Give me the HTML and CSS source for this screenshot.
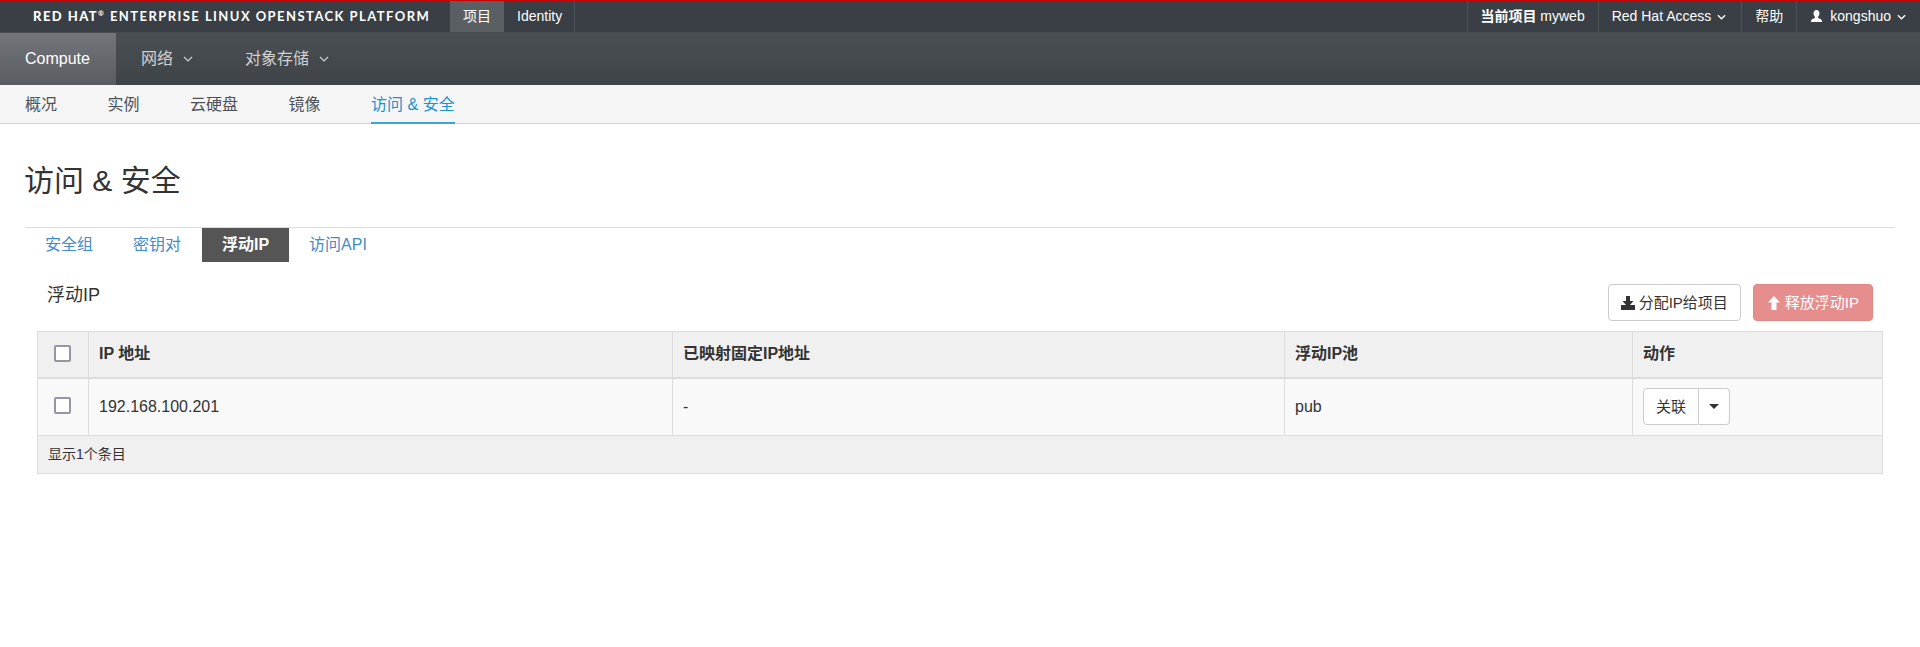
FILE: index.html
```html
<!DOCTYPE html>
<html lang="zh">
<head>
<meta charset="utf-8">
<title>访问 &amp; 安全</title>
<link rel="stylesheet" href="styles.css">
</head>
<body>
<header class="topbar">
  <div class="brand"><b>RED HAT</b><sup>®</sup> ENTERPRISE LINUX OPENSTACK PLATFORM</div>
  <nav class="topnav">
    <a class="topitem current">项目</a>
    <a class="topitem bordered">Identity</a>
  </nav>
  <nav class="topnav right">
    <a class="topitem bordered-l project"><span><b>当前项目</b> myweb</span></a>
    <a class="topitem bordered-l access"><span>Red Hat Access</span><svg class="chev-s" viewBox="0 0 10 6"><path d="M1 1l4 4 4-4" fill="none" stroke="currentColor" stroke-width="1.5"/></svg></a>
    <a class="topitem bordered-l">帮助</a>
    <a class="topitem bordered-l user"><svg class="usericon" viewBox="0 0 14 14"><path d="M7 0c2.100 0 3.200 1.600 3.200 3.600 0 1.500-.6 2.900-1.500 3.800v1.300c1.500.6 4.300 1.500 4.300 3.300v1H1v-1c0-1.800 2.800-2.700 4.300-3.300V7.400C4.400 6.500 3.800 5.100 3.800 3.600 3.800 1.600 4.900 0 7 0z" fill="currentColor"/></svg><span>kongshuo</span><svg class="chev-s" viewBox="0 0 10 6"><path d="M1 1l4 4 4-4" fill="none" stroke="currentColor" stroke-width="1.5"/></svg></a>
  </nav>
</header>

<nav class="mainnav">
  <a class="mainitem active">Compute</a>
  <a class="mainitem">网络 <svg class="chev" viewBox="0 0 10 6"><path d="M1 1l4 4 4-4" fill="none" stroke="currentColor" stroke-width="1.200"/></svg></a>
  <a class="mainitem">对象存储 <svg class="chev" viewBox="0 0 10 6"><path d="M1 1l4 4 4-4" fill="none" stroke="currentColor" stroke-width="1.200"/></svg></a>
</nav>

<nav class="subnav">
  <a class="subitem">概况</a>
  <a class="subitem">实例</a>
  <a class="subitem">云硬盘</a>
  <a class="subitem">镜像</a>
  <a class="subitem active">访问 &amp; 安全</a>
</nav>

<main class="content">
  <h1 class="pagetitle">访问 &amp; 安全</h1>
  <ul class="tabs">
    <li class="tab">安全组</li>
    <li class="tab">密钥对</li>
    <li class="tab active">浮动IP</li>
    <li class="tab">访问API</li>
  </ul>

  <div class="tablehead">
    <h3 class="tabletitle">浮动IP</h3>
    <div class="actions">
      <button class="btn"><svg class="btnicon" viewBox="0 0 14 14"><path d="M5 0h4v5h3.500L9 9h5v5H0V9h5L1.500 5H5z" fill="currentColor"/></svg>分配IP给项目</button>
      <button class="btn danger"><svg class="btnicon" viewBox="0 0 14 14"><path d="M7 0l6 6.500H9.500V14h-5V6.500H1z" fill="currentColor"/></svg>释放浮动IP</button>
    </div>
  </div>

  <table class="grid">
    <colgroup>
      <col class="c-check"><col class="c-ip"><col class="c-fixed"><col class="c-pool"><col class="c-act">
    </colgroup>
    <thead>
      <tr>
        <th class="checkcell"><span class="check"></span></th>
        <th>IP 地址</th>
        <th>已映射固定IP地址</th>
        <th>浮动IP池</th>
        <th>动作</th>
      </tr>
    </thead>
    <tbody>
      <tr>
        <td class="checkcell"><span class="check"></span></td>
        <td>192.168.100.201</td>
        <td>-</td>
        <td>pub</td>
        <td>
          <div class="split">
            <button class="splitmain">关联</button>
            <button class="splitcaret"><span class="caret"></span></button>
          </div>
        </td>
      </tr>
    </tbody>
    <tfoot>
      <tr><td colspan="5" class="foot">显示1个条目</td></tr>
    </tfoot>
  </table>
</main>
</body>
</html>
```
FILE: styles.css
```css
* { box-sizing: border-box; }
html, body { margin: 0; padding: 0; }
body {
  background: #fff;
  color: #333;
  font: 14px/20px "Liberation Sans", "Noto Sans CJK SC", sans-serif;
}
a { color: inherit; text-decoration: none; }

.topbar {
  display: flex;
  height: 33px;
  background: #393f45;
  border-top: 1px solid #c00;
  border-bottom: 1px solid #474c50;
  color: #fff;
}
.brand {
  width: 450px;
  padding-left: 33px;
  font: 700 13px/31px Lato, "Liberation Sans", sans-serif;
  letter-spacing: 1.440px;
  white-space: nowrap;
}
.brand b { font-weight: 900; }
.brand sup { font-size: 7px; line-height: 0; }
.topnav { display: flex; }
.topnav.right { margin-left: auto; }
.topitem {
  display: flex;
  align-items: center;
  gap: 6px;
  padding: 0 13px;
  line-height: 31px;
  white-space: pre;
}
.topitem.current { background: #5a5f63; }
.topitem.bordered { border-right: 1px solid #4d5257; padding-right: 12px; }
.topitem.bordered-l { border-left: 1px solid #4d5257; }
.topitem.project { padding: 0 13px 0 12px; }
.topitem.access { padding-right: 15px; }
.topitem.user { padding-right: 14px; }
.chev-s { width: 9px; height: 6px; }
.usericon { width: 13px; height: 13px; margin-right: 1px; }

.mainnav {
  display: flex;
  height: 52px;
  background: linear-gradient(#4a4f54, #3f4448);
  color: #d1d1d1;
}
.mainitem {
  display: flex;
  align-items: center;
  gap: 10px;
  padding: 0 27px 0 25px;
  font-size: 16px;
}
.mainitem.active {
  width: 116px;
  color: #fff;
  background: linear-gradient(#72767a, #595d62);
}
.chev { width: 10px; height: 6px; }

.subnav {
  display: flex;
  gap: 50.500px;
  height: 39px;
  padding: 0 25px;
  background: #f5f5f5;
  border-bottom: 1px solid #d1d1d1;
  color: #4d5258;
  font-size: 16px;
  line-height: 40px;
}
.subitem.active {
  color: #1a93cf;
  height: 39px;
  border-bottom: 2px solid #39a5dc;
}

.content { padding: 0 25px; }
.pagetitle {
  margin: 0 0 0 -1px;
  padding: 37px 0 26px;
  font-size: 30px;
  font-weight: 400;
  line-height: 40px;
  color: #333;
}
.tabs {
  display: flex;
  margin: 0;
  padding: 0;
  list-style: none;
  border-top: 1px solid #ddd;
}
.tab {
  height: 34px;
  padding: 0 20px;
  font-size: 16px;
  line-height: 33px;
  color: #428bca;
}
.tab.active {
  width: 87px;
  margin-left: 1px;
  padding: 0;
  background: #555;
  color: #fff;
  font-weight: 700;
  text-align: center;
}

.tablehead {
  display: flex;
  justify-content: space-between;
  padding: 22px 9px 10px 22px;
  margin: 0 13px 0 0;
}
.tabletitle {
  margin: 0;
  font-size: 18px;
  font-weight: 400;
  line-height: 22px;
}
.actions { display: flex; gap: 12px; }
.btn {
  display: flex;
  align-items: center;
  gap: 4px;
  height: 37px;
  padding: 0 12px;
  background: #fff;
  border: 1px solid #ccc;
  border-radius: 4px;
  color: #333;
  font: 15px/20px "Liberation Sans", "Noto Sans CJK SC", sans-serif;
}
.btn.danger {
  padding: 0 13px;
  background: #e68e8e;
  border-color: #e38686;
  color: #fff;
}
.btnicon { width: 14px; height: 14px; }

.grid {
  width: 1845px;
  margin-left: 12px;
  table-layout: fixed;
  border-collapse: collapse;
  border: 1px solid #ddd;
  font-size: 16px;
}
.c-check { width: 51px; }
.c-ip { width: 584px; }
.c-fixed { width: 612px; }
.c-pool { width: 348px; }
.c-act { width: 250px; }
.grid th, .grid td {
  padding: 0 10px;
  border: 1px solid #ddd;
  text-align: left;
  vertical-align: middle;
}
.grid th {
  height: 46px;
  background: #f0f0f0;
  border-bottom: 2px solid #ddd;
  font-weight: 700;
}
.grid tbody td { height: 58px; background: #f9f9f9; }
.grid td.foot {
  height: 38px;
  padding: 0 10px 2px;
  background: #f0f0f0;
  font-size: 14px;
}
.grid .checkcell { padding: 0; }
.check {
  display: block;
  width: 17px;
  height: 17px;
  margin: 0 0 2px 16px;
  background: #fff;
  border: 2px solid #9595a5;
  border-radius: 2px;
}
.split { display: flex; width: 87px; height: 37px; }
.splitmain, .splitcaret {
  background: #fff;
  border: 1px solid #ccc;
  color: #333;
  font: 15px/20px "Liberation Sans", "Noto Sans CJK SC", sans-serif;
  padding: 0;
}
.splitmain { width: 56px; border-radius: 4px 0 0 4px; }
.splitcaret {
  display: flex;
  align-items: center;
  justify-content: center;
  width: 31px;
  border-left: 0;
  border-radius: 0 4px 4px 0;
}
.caret {
  border-top: 5px solid #333;
  border-left: 5px solid transparent;
  border-right: 5px solid transparent;
}
```
